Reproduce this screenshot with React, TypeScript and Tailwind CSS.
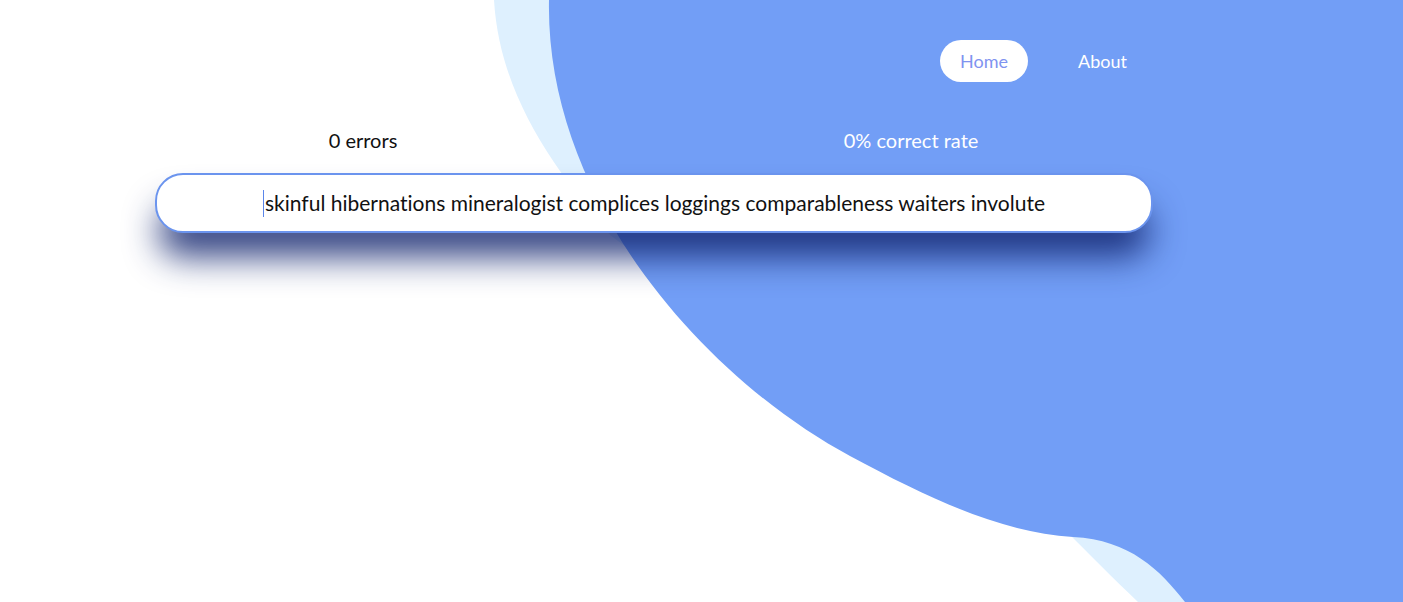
import React from 'react';

const words = 'skinful hibernations mineralogist complices loggings comparableness waiters involute';

function Backdrop() {
  return (
    <svg
      className="absolute inset-0 h-full w-full"
      viewBox="0 0 1403 602"
      preserveAspectRatio="none"
      aria-hidden
    >
      <path
        d="M494,0 C500,100 560,175 610,235 L900,450 L1060,525 C1090,555 1115,580 1138,602 L1403,602 L1403,0 Z"
        fill="#def0fe"
      />
      <path
        d="M549,0 C545,200 705,378 850,456 C930,499 1000,532 1073,537 C1130,540 1160,570 1185,602 L1403,602 L1403,0 Z"
        fill="#729ef6"
      />
    </svg>
  );
}

export default function App() {
  return (
    <div className="relative h-[602px] w-full overflow-hidden bg-white font-['Lato',sans-serif] [font-variant-ligatures:none]">
      <Backdrop />
      <div className="relative flex flex-col">
        <nav className="flex items-center pt-10 pl-[940px]">
          <a className="flex h-[42px] w-[88px] items-center justify-center rounded-full bg-white text-[18px] text-[#7f93f0]">
            Home
          </a>
          <a className="ml-[50px] text-[18px] text-white">About</a>
        </nav>

        <div className="ml-[155px] mt-[46px] flex text-[20px] leading-[24px]">
          <div className="w-[416px] shrink-0 text-center text-[#111]">0 errors</div>
          <div className="w-[680px] shrink-0 text-center text-white">0% correct rate</div>
        </div>

        <div className="ml-[155px] mt-[21px] flex h-[60px] w-[998px] items-center justify-center rounded-[28px] border-2 border-[#6b94ee] bg-white shadow-[0_28px_34px_-4px_rgba(18,36,110,0.85)]">
          <div className="flex items-center text-[21px] text-[#111]">
            <span className="mr-[1px] h-[27px] w-px bg-[#5b86ea]" />
            <span>{words}</span>
          </div>
        </div>
      </div>
    </div>
  );
}
